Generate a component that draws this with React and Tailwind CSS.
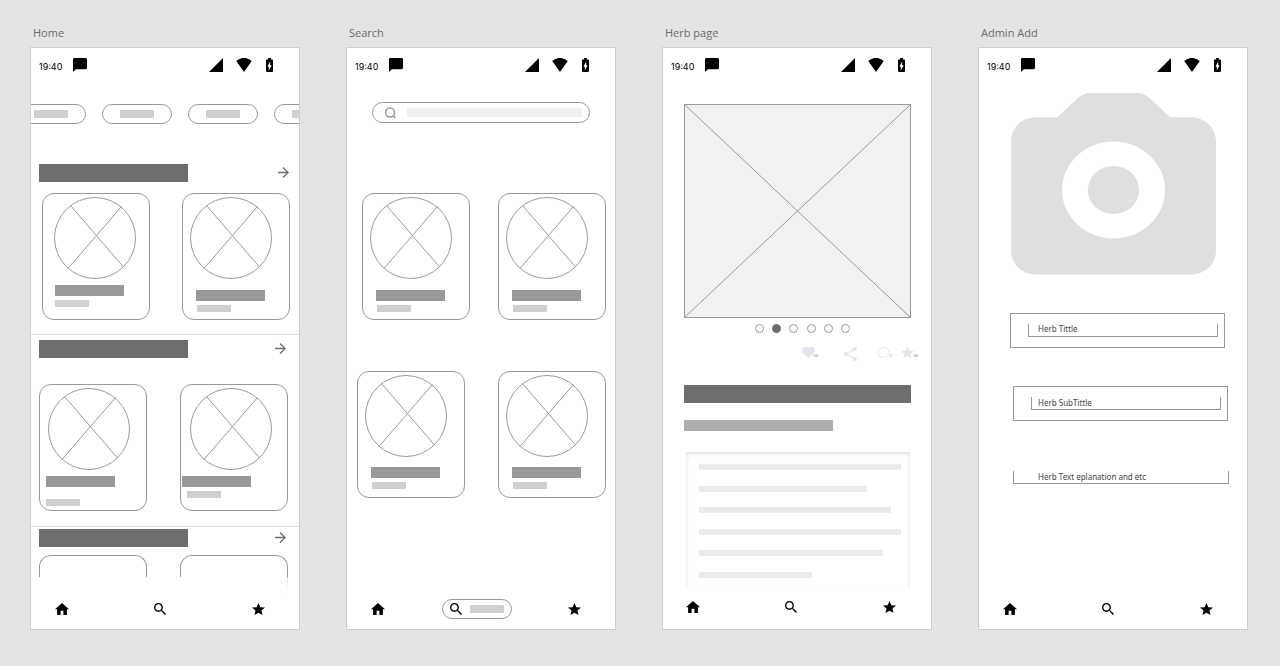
import React from "react";

const icons = {
  chat: ["2 2 20 20", "M20 2H4c-1.1 0-1.99.9-1.99 2L2 22l4-4h14c1.1 0 2-.9 2-2V4c0-1.1-.9-2-2-2z"],
  signal: ["2 2 20 20", "M2 22h20V2z"],
  wifi: ["0 3 24 18.5", "M12.01 21.49L23.64 7c-.45-.34-4.93-4-11.64-4C5.28 3 .81 6.66.36 7l11.63 14.49.01.01.01-.01z"],
  battery: [
    "7 2 10 20",
    "M15.67 4H14V2h-4v2H8.33C7.6 4 7 4.6 7 5.33v15.33C7 21.4 7.6 22 8.33 22h7.33c.74 0 1.34-.6 1.34-1.33V5.33C17 4.6 16.4 4 15.67 4zM11 20v-5.5H9L13 7v5.5h2L11 20z",
  ],
  home: ["2 3 20 17", "M10 20v-6h4v6h5v-8h3L12 3 2 12h3v8z"],
  search: [
    "3 3 17.5 17.5",
    "M15.5 14h-.79l-.28-.27C15.41 12.59 16 11.11 16 9.5 16 5.91 13.09 3 9.5 3S3 5.91 3 9.5 5.91 16 9.5 16c1.61 0 3.09-.59 4.23-1.57l.27.28v.79l5 4.99L20.49 19l-4.99-5zm-6 0C7.01 14 5 11.99 5 9.5S7.01 5 9.5 5 14 7.01 14 9.5 11.99 14 9.5 14z",
  ],
  star: ["2 2 20 19", "M12 17.27L18.18 21l-1.64-7.03L22 9.24l-7.19-.61L12 2 9.19 8.63 2 9.24l5.46 4.73L5.82 21z"],
  arrow: ["4 4 16 16", "M12 4l-1.41 1.41L16.17 11H4v2h12.17l-5.58 5.59L12 20l8-8z"],
  heart: [
    "2 3 20 18.35",
    "M12 21.35l-1.45-1.32C5.4 15.36 2 12.28 2 8.5 2 5.42 4.42 3 7.5 3c1.74 0 3.41.81 4.5 2.09C13.09 3.81 14.76 3 16.5 3 19.58 3 22 5.42 22 8.5c0 3.78-3.4 6.86-8.55 11.54L12 21.35z",
  ],
  share: [
    "3 2 18 20",
    "M18 16.08c-.76 0-1.44.3-1.96.77L8.91 12.7c.05-.23.09-.46.09-.7s-.04-.47-.09-.7l7.05-4.11c.54.5 1.25.81 2.04.81 1.66 0 3-1.34 3-3s-1.34-3-3-3-3 1.34-3 3c0 .24.04.47.09.7L8.04 9.81C7.5 9.31 6.79 9 6 9c-1.66 0-3 1.34-3 3s1.34 3 3 3c.79 0 1.5-.31 2.04-.81l7.12 4.16c-.05.21-.08.43-.08.65 0 1.61 1.31 2.92 2.92 2.92 1.61 0 2.92-1.31 2.92-2.92s-1.31-2.92-2.92-2.92z",
  ],
};

function Icon({ name, className }) {
  const [viewBox, d] = icons[name];
  return (
    <svg viewBox={viewBox} className={`shrink-0 ${className}`} fill="currentColor" preserveAspectRatio="none" aria-hidden="true">
      <path d={d} />
    </svg>
  );
}

function StatusBar() {
  return (
    <div className="flex h-6 items-end pr-[26px] pl-2 text-black">
      <span className="w-6 font-[Inter,sans-serif] text-[9px] leading-[11px] whitespace-nowrap">19:40</span>
      <Icon name="chat" className="ml-[10px] h-[14px] w-[14px]" />
      <div className="ml-auto flex items-center">
        <Icon name="signal" className="h-[14px] w-[14px]" />
        <Icon name="wifi" className="ml-[13px] h-[14px] w-4" />
        <Icon name="battery" className="ml-[14px] h-[14px] w-[7px]" />
      </div>
    </div>
  );
}

function NavBar({ raised = false, active }) {
  return (
    <nav className={`mt-auto flex h-5 items-center justify-between text-black ${raised ? "mb-3 pr-[35px] pl-[23px]" : "mb-[10px] pr-[34px] pl-6"}`}>
      <a href="#home" aria-label="Home">
        <Icon name="home" className="h-3 w-[14px]" />
      </a>
      {active === "search" ? (
        <a href="#search" aria-label="Search" className="flex h-5 w-[70px] items-center justify-between rounded-full border border-[#999] px-[7px]">
          <Icon name="search" className="h-3 w-3" />
          <span className="h-2 w-[34px] bg-[#cfcfcf]" />
        </a>
      ) : (
        <a href="#search" aria-label="Search" className="pr-[2px]">
          <Icon name="search" className="h-3 w-3" />
        </a>
      )}
      <a href="#favourites" aria-label="Favourites">
        <Icon name="star" className="h-3 w-[13px]" />
      </a>
    </nav>
  );
}

function Artboard({ title, children }) {
  return (
    <section className="flex min-w-0 flex-col">
      <h2 className="h-[22px] pl-[3px] text-[11px] leading-4 text-[#6b6b6b]">{title}</h2>
      <div className="flex grow flex-col overflow-hidden border border-[#cfcfcf] bg-white">{children}</div>
    </section>
  );
}

function Card({ circle = "ml-[7px]", title, sub }) {
  return (
    <article className="h-[127px] w-[108px] rounded-xl border border-[#999] pt-[3px]">
      <svg viewBox="0 0 82 82" className={`h-[82px] w-[82px] ${circle}`} fill="none" stroke="#999" aria-hidden="true">
        <circle cx="41" cy="41" r="40.5" />
        <path d="M16.5 8.5L69.500 70M67.500 9.500L14 71.500" />
      </svg>
      <div className={`h-[11px] w-[69px] bg-[#999] ${title}`} />
      <div className={`h-[7px] w-[34px] bg-[#cfcfcf] ${sub}`} />
    </article>
  );
}

function SectionHeader({ label, end = "pr-[13px]" }) {
  return (
    <div className={`flex items-center justify-between pl-2 ${end}`}>
      <div className="h-[18px] w-[149px] bg-[#6e6e6e]" />
      <button type="button" aria-label={label} className="pb-px text-[#707070]">
        <Icon name="arrow" className="h-[11px] w-[11px]" />
      </button>
    </div>
  );
}

function Chip() {
  return (
    <button type="button" aria-label="Category" className="flex h-5 w-[70px] shrink-0 items-center justify-center rounded-full border border-[#999]">
      <span className="h-2 w-[34px] bg-[#cfcfcf]" />
    </button>
  );
}

function HomeScreen() {
  return (
    <Artboard title="Home">
      <StatusBar />
      <div className="mt-8 overflow-hidden">
        <div className="-ml-[15px] flex gap-4">
          <Chip />
          <Chip />
          <Chip />
          <Chip />
        </div>
      </div>
      <div className="mt-10">
        <SectionHeader label="See more in first section" end="pr-[10px]" />
      </div>
      <div className="mt-[11px] flex justify-between pr-[9px] pl-[11px]">
        <Card circle="ml-[11px]" title="ml-3 mt-[6px]" sub="ml-3 mt-1" />
        <Card title="ml-[13px] mt-[11px]" sub="ml-[14px] mt-1" />
      </div>
      <div className="mt-[14px] border-t border-[#dedede] pt-[5px]">
        <SectionHeader label="See more in second section" />
      </div>
      <div className="mt-[26px] flex justify-between pr-[11px] pl-2">
        <Card circle="ml-2" title="ml-[6px] mt-[6px]" sub="ml-[6px] mt-3" />
        <Card circle="ml-[9px]" title="ml-[1px] mt-[6px]" sub="ml-[6px] mt-1" />
      </div>
      <div className="mt-[15px] border-t border-[#dedede] pt-[2px]">
        <SectionHeader label="See more in third section" />
      </div>
      <div className="mt-2 flex justify-between pr-[11px] pl-2">
        <div className="h-[22px] w-[108px] rounded-t-xl border border-b-0 border-[#999]" />
        <div className="relative h-[22px] w-[108px] rounded-t-xl border border-b-0 border-[#999]">
          <div className="absolute top-full -right-px h-4 w-px bg-linear-to-b from-[#dedede] to-white" />
        </div>
      </div>
      <NavBar />
    </Artboard>
  );
}

function SearchScreen() {
  return (
    <Artboard title="Search">
      <StatusBar />
      <label className="mt-[30px] mr-[25px] ml-[25px] flex h-[21px] items-center rounded-full border border-[#999] pr-[7px] pl-3">
        <svg viewBox="0 0 12 12" className="h-3 w-3 shrink-0" fill="none" stroke="#999" strokeWidth="1.5" aria-hidden="true">
          <circle cx="5" cy="5.500" r="4.500" />
          <path d="M8 8.500L10.500 11" />
        </svg>
        <input type="search" aria-label="Search herbs" className="ml-[10px] h-[9px] min-w-0 grow appearance-none bg-[#f1f1f1] text-[8px] outline-none" />
      </label>
      <div className="mt-[70px] flex justify-between pr-[9px] pl-[15px]">
        <Card title="ml-[13px] mt-[11px]" sub="ml-[14px] mt-1" />
        <Card title="ml-[13px] mt-[11px]" sub="ml-[14px] mt-1" />
      </div>
      <div className="mt-[51px] flex justify-between pr-[9px] pl-[10px]">
        <Card title="ml-[13px] mt-[10px]" sub="ml-[14px] mt-1" />
        <Card title="ml-[13px] mt-[10px]" sub="ml-[14px] mt-1" />
      </div>
      <NavBar active="search" />
    </Artboard>
  );
}

const pages = [1, 2, 3, 4, 5, 6];
const lines = ["w-full", "w-[83%]", "w-[95%]", "w-full", "w-[91%]", "w-[56%]"];

function HerbScreen() {
  return (
    <Artboard title="Herb page">
      <StatusBar />
      <svg viewBox="0 0 227 214" className="mt-8 mr-5 ml-[21px] h-[214px]" preserveAspectRatio="none" fill="none" stroke="#999" role="img" aria-label="Herb photo">
        <path d="M.5.5h226v213H.5z" fill="#f1f1f1" />
        <path d="M.5.5l226 213M226.500.5L.5 213.500" />
      </svg>
      <div className="mt-[6px] flex justify-center pl-[11px]">
        <div className="flex w-24 justify-between">
          {pages.map((n) => (
            <button
              key={n}
              type="button"
              aria-label={`Photo ${n}`}
              className={`h-[9px] w-[9px] rounded-full border ${n === 2 ? "border-[#6e6e6e] bg-[#6e6e6e]" : "border-[#999] bg-white"}`}
            />
          ))}
        </div>
      </div>
      <div className="mt-[14px] flex h-[14px] items-start justify-end pr-[13px] text-[4px] leading-[4px] text-[#808080]">
        <button type="button" aria-label="Like" className="flex items-end">
          <Icon name="heart" className="h-[11px] w-[13px] text-[#e1e6ee]" />
          <span className="-ml-px">54</span>
        </button>
        <button type="button" aria-label="Share" className="ml-[26px]">
          <Icon name="share" className="h-[14px] w-[13px] text-[#e1e6ee]" />
        </button>
        <button type="button" aria-label="Comments" className="ml-5 flex items-end">
          <svg viewBox="0 0 13 12" className="h-[11px] w-[13px]" fill="none" stroke="#e1e6ee" aria-hidden="true">
            <path d="M3 10C-.5 7.500 0 .8 6.500.8s7.500 6.500 3.500 9C9 10.500 9.500 11 11.500 11.300M3 10L1.500 11.300H5L5.500 10.300H8" />
          </svg>
          <span className="-ml-px">2</span>
        </button>
        <button type="button" aria-label="Favourite" className="ml-[10px] flex items-end">
          <Icon name="star" className="h-[11px] w-[13px] text-[#e1e6ee]" />
          <span className="-ml-px">86</span>
        </button>
      </div>
      <div className="mt-6 mr-5 ml-[21px] h-[18px] bg-[#6e6e6e]" />
      <div className="mt-[17px] ml-[21px] h-[11px] w-[149px] bg-[#aeaeae]" />
      <div className="mt-[21px] mr-[21px] ml-[23px] flex h-[136px] flex-col pt-3 pr-[9px] pl-[13px] shadow-[inset_0_2px_4px_#e2e2e2]">
        <div className="flex h-[114px] flex-col justify-between">
          {lines.map((width, i) => (
            <div key={i} className={`h-[6px] bg-[#ebebeb] ${width}`} />
          ))}
        </div>
      </div>
      <NavBar raised />
    </Artboard>
  );
}

const fieldText = "block h-[13px] w-full border-x border-b border-[#999] bg-transparent font-['Noto_Sans',sans-serif] text-[8px] text-[#444] outline-none placeholder:text-[#444] placeholder:opacity-100";

function AdminScreen() {
  return (
    <Artboard title="Admin Add">
      <StatusBar />
      <svg viewBox="0 0 205 182" className="mt-[21px] mr-[31px] ml-8 h-[182px]" preserveAspectRatio="none" role="img" aria-label="Add photo">
        <path
          fill="#dfdfdf"
          fillRule="evenodd"
          d="M25 24.300H46.500L66 5.800Q72 0 80 0H126Q133 0 139.500 5.800L159 24.300H180C194 24.300 205 35 205 48.500V158C205 171 194 181.500 180 181.500H25C11 181.500 0 171 0 158V48.500C0 35 11 24.300 25 24.300zM102.500 48.500a51.500 48.500 0 1 0 0 97a51.500 48.500 0 1 0 0-97z"
        />
        <ellipse cx="102.500" cy="97" rx="25.600" ry="24" fill="#dfdfdf" />
      </svg>
      <div className="mt-[38px] mr-[22px] ml-[31px] h-[35px] border border-[#999] pt-[10px] pr-[6px] pl-[17px]">
        <input aria-label="Herb Tittle" placeholder="Herb Tittle" className={`pb-1 pl-[9px] ${fieldText}`} />
      </div>
      <div className="mt-[38px] mr-[19px] ml-[34px] h-[35px] border border-[#999] pt-[10px] pr-[6px] pl-[17px]">
        <input aria-label="Herb SubTittle" placeholder="Herb SubTittle" className={`pb-[2px] pl-[6px] ${fieldText}`} />
      </div>
      <div className="mt-[50px] mr-[18px] ml-[34px]">
        <input aria-label="Herb Text eplanation and etc" placeholder="Herb Text eplanation and etc" className={`pb-px pl-6 ${fieldText}`} />
      </div>
      <NavBar />
    </Artboard>
  );
}

export default function App() {
  return (
    <main className="grid min-h-screen grid-cols-4 gap-[46px] bg-[#e4e4e4] pt-[25px] pr-8 pb-9 pl-[30px] font-['Open_Sans',sans-serif]">
      <HomeScreen />
      <SearchScreen />
      <HerbScreen />
      <AdminScreen />
    </main>
  );
}
